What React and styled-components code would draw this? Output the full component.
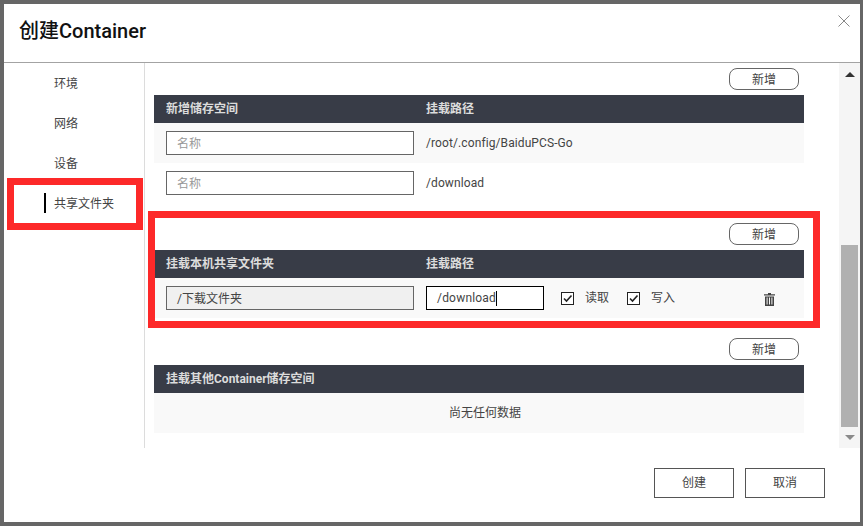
import React from 'react';
import styled, { createGlobalStyle } from 'styled-components';

const GlobalStyle = createGlobalStyle`
    html, body {
        margin: 0;
        height: 526px;
        overflow: hidden;
        background: #666666;
        font-family: Roboto, "Noto Sans CJK SC", sans-serif;
        font-size: 12px;
        color: #444;
    }
`;

const Dialog = styled.div`
    width: 856px;
    height: 518px;
    margin: 4px 3px 4px 4px;
    background: #fff;
    display: flex;
    flex-direction: column;
    position: relative;
`;

const Header = styled.div`
    height: 58px;
    border-bottom: 1px solid #a3a3a3;
    padding-left: 15px;
    display: flex;
    align-items: center;
    justify-content: space-between;
`;

const Title = styled.h1`
    margin: 0 0 8px;
    font-size: 20px;
    font-weight: 500;
    color: #111;
`;

const Close = styled.button`
    border: 0;
    padding: 0;
    background: none;
    width: 12px;
    height: 12px;
    margin: 0 10px 25px 0;
    color: #888;
    display: flex;
`;

const Body = styled.div`
    height: 385px;
    display: flex;
`;

const Sidebar = styled.nav`
    width: 140px;
    border-right: 1px solid #dcdcdc;
`;

const NavItem = styled.div`
    box-sizing: border-box;
    height: 40px;
    padding: 0 0 2px 50px;
    display: flex;
    align-items: center;
    position: relative;
    color: #444;

    ${({ $active }) =>
        $active &&
        `&::before {
            content: '';
            position: absolute;
            left: 40px;
            top: 10px;
            width: 2px;
            height: 20px;
            background: #000;
        }`}
`;

const Highlight = styled.div`
    position: absolute;
    border: 7px solid #fd2929;
    pointer-events: none;
    top: ${({ $top }) => $top}px;
    right: ${({ $right }) => $right}px;
    bottom: ${({ $bottom }) => $bottom}px;
    left: ${({ $left }) => $left}px;
`;

const Content = styled.div`
    flex: 1;
    padding: 5px 35px 0 9px;
    display: flex;
    flex-direction: column;
    gap: 20px;
`;

const Section = styled.section`
    position: relative;
`;

const AddRow = styled.div`
    display: flex;
    justify-content: flex-end;
    padding-right: 5px;
    margin-bottom: 5px;
`;

const AddButton = styled.button`
    width: 70px;
    height: 22px;
    padding: 0 0 2px;
    border: 1px solid #666;
    border-radius: 8px;
    background: #fff;
    font: inherit;
    color: #444;
`;

const TableHead = styled.div`
    box-sizing: border-box;
    height: 28px;
    padding: 0 0 4px 12px;
    background: #383c47;
    color: #dcdcdc;
    font-weight: 700;
    display: grid;
    grid-template-columns: 260px 1fr;
    align-items: center;
`;

const Row = styled.div`
    height: 40px;
    padding-left: 12px;
    background: ${({ $striped }) => ($striped ? '#f9f9f9' : '#fff')};
    display: grid;
    grid-template-columns: 260px ${({ $wide }) => ($wide ? '135px 66px 66px 1fr' : '1fr')};
    align-items: center;
    color: #444;
`;

const EmptyRow = styled(Row)`
    box-sizing: border-box;
    grid-template-columns: 1fr;
    padding-bottom: 4px;
    text-align: center;
`;

const PathText = styled.span`
    letter-spacing: 0.1px;
`;

const Field = styled.div`
    box-sizing: border-box;
    width: ${({ $width }) => $width}px;
    height: 24px;
    padding: 0 0 ${({ $focused }) => ($focused ? '0' : '2px')} 10px;
    border: 1px solid ${({ $focused }) => ($focused ? '#000' : '#666')};
    background: ${({ $disabled }) => ($disabled ? '#f0f0f0' : '#fff')};
    color: ${({ $placeholder }) => ($placeholder ? '#999' : '#444')};
    letter-spacing: ${({ $focused }) => ($focused ? '0.2px' : '0')};
    display: flex;
    align-items: center;
`;

const Caret = styled.span`
    width: 1px;
    height: 15px;
    background: #000;
`;

const Check = styled.label`
    display: flex;
    align-items: center;
    gap: 11px;
`;

const CheckText = styled.span`
    margin-top: -3px;
`;

const Trash = styled.div`
    padding: 2px 0 0 71px;
    display: flex;
    color: #444;
`;

const Scrollbar = styled.div`
    width: 21px;
    background: #f5f5f5;
    display: flex;
    flex-direction: column;
    align-items: center;
`;

const ArrowCell = styled.div`
    height: ${({ $height }) => $height}px;
    display: flex;
    align-items: center;
    justify-content: center;
`;

const Track = styled.div`
    flex: 1;
    width: 100%;
    display: flex;
    flex-direction: column;
    justify-content: flex-end;
    align-items: center;
`;

const Thumb = styled.div`
    width: 17px;
    height: 182px;
    background: #b0b0b0;
`;

const Arrow = styled.span`
    width: 0;
    height: 0;
    border-left: 5px solid transparent;
    border-right: 5px solid transparent;
    ${({ $down }) => ($down ? 'border-top: 5px solid #8a8a8a;' : 'border-bottom: 5px solid #333;')}
`;

const Footer = styled.div`
    flex: 1;
    padding: 20px 35px 0 0;
    display: flex;
    justify-content: flex-end;
    align-items: flex-start;
    gap: 11px;
`;

const FooterButton = styled.button`
    width: 80px;
    height: 30px;
    padding: 0 0 4px;
    border: 1px solid #555;
    background: #fff;
    font: inherit;
    color: #444;
`;

const CheckIcon = () => (
    <svg width="13" height="13" viewBox="0 0 13 13">
        <rect x="0.5" y="0.5" width="12" height="12" fill="#fff" stroke="#222" />
        <path d="M3 6.5 L5.5 9 L10.5 3.5" fill="none" stroke="#222" strokeWidth="1.6" />
    </svg>
);

const TrashIcon = () => (
    <svg width="11" height="13" viewBox="0 0 11 13" fill="currentColor">
        <path d="M4 0h3v1.2h4v1.4H0V1.2h4z" />
        <path d="M1 3.4h9V13H1zM2.6 4.6v7h1v-7zm2.4 0v7h1v-7zm2.4 0v7h1v-7z" fillRule="evenodd" />
    </svg>
);

const App = () => {
    return (
        <>
            <GlobalStyle />
            <Dialog>
                <Header>
                    <Title>创建Container</Title>
                    <Close aria-label="关闭">
                        <svg width="12" height="12" viewBox="0 0 12 12" stroke="currentColor" strokeWidth="1">
                            <path d="M0.5 0.5 L11.5 11.5 M11.5 0.5 L0.5 11.5" />
                        </svg>
                    </Close>
                </Header>
                <Body>
                    <Sidebar>
                        <NavItem>环境</NavItem>
                        <NavItem>网络</NavItem>
                        <NavItem>设备</NavItem>
                        <NavItem $active>
                            共享文件夹
                            <Highlight $top={-5} $right={1} $bottom={-7} $left={3} />
                        </NavItem>
                    </Sidebar>
                    <Content>
                        <Section>
                            <AddRow>
                                <AddButton>新增</AddButton>
                            </AddRow>
                            <TableHead>
                                <span>新增储存空间</span>
                                <span>挂载路径</span>
                            </TableHead>
                            <Row $striped>
                                <Field $width={248} $placeholder>名称</Field>
                                <PathText>/root/.config/BaiduPCS-Go</PathText>
                            </Row>
                            <Row>
                                <Field $width={248} $placeholder>名称</Field>
                                <PathText>/download</PathText>
                            </Row>
                        </Section>
                        <Section>
                            <AddRow>
                                <AddButton>新增</AddButton>
                            </AddRow>
                            <TableHead>
                                <span>挂载本机共享文件夹</span>
                                <span>挂载路径</span>
                            </TableHead>
                            <Row $striped $wide>
                                <Field $width={248} $disabled>/下载文件夹</Field>
                                <Field $width={118} $focused>
                                    /download
                                    <Caret />
                                </Field>
                                <Check>
                                    <CheckIcon />
                                    <CheckText>读取</CheckText>
                                </Check>
                                <Check>
                                    <CheckIcon />
                                    <CheckText>写入</CheckText>
                                </Check>
                                <Trash>
                                    <TrashIcon />
                                </Trash>
                            </Row>
                            <Highlight $top={-12} $right={-16} $bottom={-10} $left={-6} />
                        </Section>
                        <Section>
                            <AddRow>
                                <AddButton>新增</AddButton>
                            </AddRow>
                            <TableHead>
                                <span>挂载其他Container储存空间</span>
                            </TableHead>
                            <EmptyRow $striped>尚无任何数据</EmptyRow>
                        </Section>
                    </Content>
                    <Scrollbar>
                        <ArrowCell $height={22}>
                            <Arrow />
                        </ArrowCell>
                        <Track>
                            <Thumb />
                        </Track>
                        <ArrowCell $height={21}>
                            <Arrow $down />
                        </ArrowCell>
                    </Scrollbar>
                </Body>
                <Footer>
                    <FooterButton>创建</FooterButton>
                    <FooterButton>取消</FooterButton>
                </Footer>
            </Dialog>
        </>
    );
};

export default App;
